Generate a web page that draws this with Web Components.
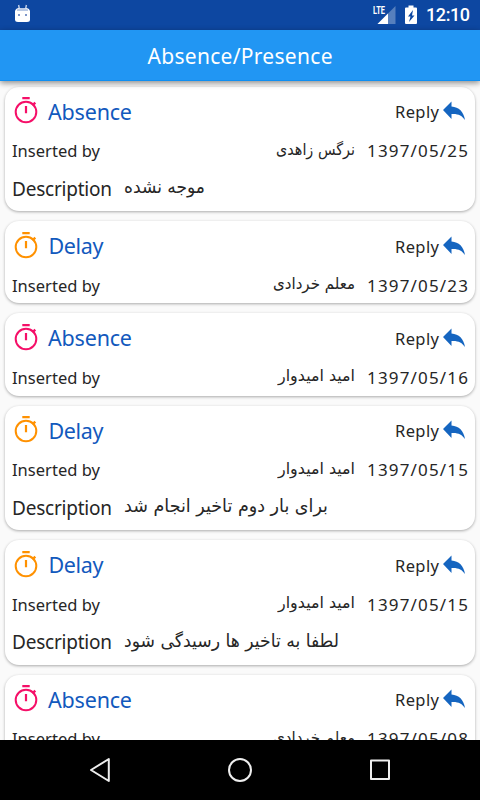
<!DOCTYPE html>
<html lang="en">
<head>
<meta charset="utf-8">
<title>Absence/Presence</title>
<style>
  body {
    margin: 0;
    height: 800px;
    overflow: hidden;
    font-family: "Noto Sans", "DejaVu Sans", sans-serif;
  }
</style>
</head>
<body>
<absence-app></absence-app>
<script>
// one line of text fitted to a given width: tracked for latin, scaled for
// joined scripts, where tracking would break the letters apart
class FitText extends HTMLElement {
  constructor() {
    super();
    this.attachShadow({ mode: "open" });
  }
  connectedCallback() {
    this.shadowRoot.innerHTML = `
      <style>
        :host {
          display: block;
          flex: none;
          width: ${this.getAttribute("width")}px;
          white-space: nowrap;
        }
        span { display: inline-block; transform-origin: 0 50%; }
      </style>
      <span><slot></slot></span>
    `;
    const span = this.shadowRoot.querySelector("span");
    const width = Number(this.getAttribute("width"));
    const natural = span.getBoundingClientRect().width;
    if (this.hasAttribute("scaled")) {
      span.style.transform = `scaleX(${width / natural})`;
    } else {
      span.style.letterSpacing = `${(width - natural) / (this.textContent.length - 1)}px`;
    }
  }
}

class StatusBar extends HTMLElement {
  constructor() {
    super();
    this.attachShadow({ mode: "open" });
  }
  connectedCallback() {
    this.shadowRoot.innerHTML = `
      <style>
        :host {
          display: flex;
          align-items: center;
          box-sizing: border-box;
          height: 30px;
          padding: 0 10px 0 14px;
          background: #0d47a1;
          color: #fff;
          font: 500 18px/32px Roboto, sans-serif;
        }
        svg { display: block; flex: none; }
        .robot { margin-top: -2px; }
        .signal { margin-left: auto; }
        .battery { margin: 0 9px 0 9px; }
      </style>
      <svg class="robot" width="17" height="20" viewBox="0 0 17 20">
        <path d="M4.600 1l.8 4M12.400 1l-.8 4" stroke="#c3d1e8" stroke-width="1.400"/>
        <path d="M1 7q1-3 4-3h7q3 0 4 3v8.500q0 2.500-3 2.500H4q-3 0-3-2.500z" fill="#fff"/>
        <path d="M3 5.500q2-1.500 4-1.500h3q2 0 4 1.500v1.500H3z" fill="#b9c9e4"/>
        <path d="M4 10h2v2H4zM11 10h2v2h-2z" fill="#7d96c9"/>
      </svg>
      <svg class="signal" width="23" height="20" viewBox="0 0 23 20">
        <path d="M22.500 1v18H4.500z" fill="#567fbd"/>
        <path d="M0 0h12v10H0z" fill="#0d47a1"/>
        <path d="M15 8.500V19H4.500z" fill="#fff"/>
        <text x="0" y="9" fill="#fff" font-family="Roboto" font-size="10.500" font-weight="700" textLength="12" lengthAdjust="spacingAndGlyphs">LTE</text>
      </svg>
      <svg class="battery" width="12" height="20" viewBox="0 0 12 20">
        <path d="M0 3.500q0-1 1-1h2.500V.5h5v2H11q1 0 1 1v14.500q0 1-1 1H1q-1 0-1-1z" fill="#fff"/>
        <path d="M8 5L3 11.500h2.500L4 17l5.500-6.500H7z" fill="#0d47a1"/>
      </svg>
      <fit-text width="44">12:10</fit-text>
    `;
  }
}

class AppBar extends HTMLElement {
  constructor() {
    super();
    this.attachShadow({ mode: "open" });
  }
  connectedCallback() {
    this.shadowRoot.innerHTML = `
      <style>
        :host {
          display: flex;
          justify-content: center;
          box-sizing: border-box;
          height: 51px;
          position: relative;
          z-index: 1;
          background: #2196f3;
          border-bottom: 1px solid #0d8ef2;
          box-shadow: 0 2px 6px rgba(0, 0, 0, .45);
          color: #fff;
          font-size: 21px;
          line-height: 53px;
        }
      </style>
      <slot></slot>
    `;
  }
}

class RecordCard extends HTMLElement {
  constructor() {
    super();
    this.attachShadow({ mode: "open" });
  }
  connectedCallback() {
    const type = this.getAttribute("type");
    const color = type === "Absence" ? "#f50f68" : "#ff9100";
    const text = this.getAttribute("text");
    this.shadowRoot.innerHTML = `
      <style>
        :host {
          display: block;
          flex: none;
          box-sizing: border-box;
          height: ${text ? 124.4 : 82.4}px;
          padding: 6px 7px 0;
          border-radius: 14px;
          background: #fff;
          box-shadow: 0 1px 3px rgba(0, 0, 0, .32);
          color: #262626;
        }
        div { display: flex; align-items: center; }
        svg { display: block; flex: none; }
        .head { height: 38px; }
        .info { height: 40px; }
        .desc { height: 36px; }
        .watch { margin: -3px 0 0 1px; }
        .title { color: #1259bd; font-size: 21.500px; margin: -1px 0 0 ${type === "Absence" ? 9 : 9.5}px; }
        .reply { margin-left: auto; font-size: 16.500px; }
        .label { font-size: 16.500px; }
        .date { font-size: 17px; }
        .name { margin: -3px 12px 0 auto; font: 16px "DejaVu Sans", sans-serif; }
        .about { font-size: 19px; }
        .text { margin: -4px 0 0 12px; font: 18px "DejaVu Sans", sans-serif; }
        .arrow { margin: -1px 3px 0 4px; }
      </style>
      <div class="head">
        <svg class="watch" width="26" height="28" viewBox="0 0 26 28" fill="none" stroke="${color}">
          <circle cx="13" cy="16" r="10.300" stroke-width="2"/>
          <path d="M9.300 2.200h7.400M13 10v7.300" stroke-width="2.200"/>
          <path d="M19.500 9.500l2.800-2.800" stroke-width="2.400"/>
        </svg>
        <fit-text class="title" width="${type === "Absence" ? 84 : 55}">${type}</fit-text>
        <fit-text class="reply" width="44">Reply</fit-text>
        <svg class="arrow" width="22" height="20" viewBox="0 0 22 20">
          <path d="M0 9L8.500 .5v5C16 6 20.500 10.500 22 19c-3-4.500-7-6.500-13.500-6v5z" fill="#1565c0"/>
        </svg>
      </div>
      <div class="info">
        <fit-text class="label" width="88">Inserted by</fit-text>
        <fit-text class="name" scaled width="${this.getAttribute("name-width")}">${this.getAttribute("name")}</fit-text>
        <fit-text class="date" width="101">${this.getAttribute("date")}</fit-text>
      </div>
      ${text ? `
      <div class="desc">
        <fit-text class="about" width="100">Description</fit-text>
        <fit-text class="text" scaled width="${this.getAttribute("text-width")}">${text}</fit-text>
      </div>` : ""}
    `;
  }
}

class NavBar extends HTMLElement {
  constructor() {
    super();
    this.attachShadow({ mode: "open" });
  }
  connectedCallback() {
    this.shadowRoot.innerHTML = `
      <style>
        :host {
          display: flex;
          align-items: center;
          justify-content: center;
          gap: 112px;
          height: 60px;
          background: #000;
          position: relative;
          z-index: 1;
        }
        svg { display: block; }
      </style>
      <svg width="28" height="28" fill="none" stroke="#eee" stroke-width="2" stroke-linejoin="round"><path d="M22.800 3v22L5 14z"/></svg>
      <svg width="28" height="28" fill="none" stroke="#eee" stroke-width="2"><circle cx="14" cy="14" r="11"/></svg>
      <svg width="28" height="28" fill="none" stroke="#eee" stroke-width="2" stroke-linejoin="round"><path d="M5 4.500h18v18.500H5z"/></svg>
    `;
  }
}

class AbsenceApp extends HTMLElement {
  constructor() {
    super();
    this.attachShadow({ mode: "open" });
  }
  connectedCallback() {
    this.shadowRoot.innerHTML = `
      <style>
        :host {
          display: flex;
          flex-direction: column;
          width: 480px;
          height: 800px;
          background: #fafafa;
        }
        main {
          display: flex;
          flex-direction: column;
          flex: 1;
          gap: 10px;
          min-height: 0;
          overflow: hidden;
          padding: 5.700px 5px 0;
        }
      </style>
      <status-bar></status-bar>
      <app-bar><fit-text width="185">Absence/Presence</fit-text></app-bar>
      <main>
        <record-card type="Absence" name="نرگس زاهدی" name-width="79" date="1397/05/25" text="موجه نشده" text-width="81"></record-card>
        <record-card type="Delay" name="معلم خردادی" name-width="82" date="1397/05/23"></record-card>
        <record-card type="Absence" name="امید امیدوار" name-width="77" date="1397/05/16"></record-card>
        <record-card type="Delay" name="امید امیدوار" name-width="77" date="1397/05/15" text="برای بار دوم تاخیر انجام شد" text-width="204"></record-card>
        <record-card type="Delay" name="امید امیدوار" name-width="77" date="1397/05/15" text="لطفا به تاخیر ها رسیدگی شود" text-width="215"></record-card>
        <record-card type="Absence" name="معلم خردادی" name-width="82" date="1397/05/08"></record-card>
      </main>
      <nav-bar></nav-bar>
    `;
  }
}

// the app goes last, so that the parts exist once it renders them
customElements.define("status-bar", StatusBar);
customElements.define("app-bar", AppBar);
customElements.define("record-card", RecordCard);
customElements.define("nav-bar", NavBar);
customElements.define("fit-text", FitText);
customElements.define("absence-app", AbsenceApp);
</script>
</body>
</html>
